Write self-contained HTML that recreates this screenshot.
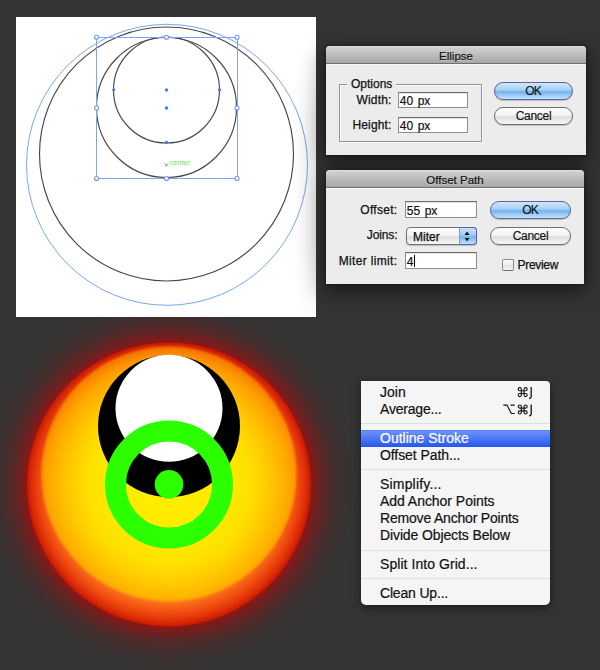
<!DOCTYPE html>
<html><head><meta charset="utf-8">
<style>
html,body{margin:0;padding:0;}
body{width:600px;height:670px;background:#343434;position:relative;overflow:hidden;font-family:"Liberation Sans",sans-serif;}
.abs{position:absolute;}
svg.art{position:absolute;left:0;top:0;}
.dlg{position:absolute;background:#ececec;border-radius:4px 4px 0 0;box-shadow:0 6px 20px 2px rgba(0,0,0,0.5),0 0 4px rgba(0,0,0,0.35);}
.tb{position:absolute;left:0;top:0;right:0;height:17px;border-radius:4px 4px 0 0;background:linear-gradient(#e6e6e6,#d2d2d2 1px,#bdbdbd 50%,#a6a6a6);border-bottom:1px solid #6e6e6e;}
.hl{position:absolute;left:0;right:0;top:18px;height:1px;background:#f8f8f8;}
.tt{position:absolute;left:0;right:0;top:2.8px;text-align:center;font-size:11.5px;line-height:14px;color:#111;-webkit-text-stroke:0.2px #111;text-shadow:0 1px 0 rgba(255,255,255,0.35);}
.lbl{position:absolute;font-size:12px;color:#111;white-space:nowrap;line-height:14px;-webkit-text-stroke:0.25px #111;}
.fld{position:absolute;background:#fff;border:1px solid #8e8e8e;border-top-color:#6a6a6a;box-shadow:inset 0 1px 1px rgba(0,0,0,0.12);box-sizing:border-box;}
.fld span{position:absolute;left:0.8px;top:1px;word-spacing:1.2px;font-size:12px;line-height:14px;color:#111;-webkit-text-stroke:0.2px #111;}
.caret{position:absolute;left:7.5px;top:2px;width:1px;height:12px;background:#000;}
.btn{position:absolute;box-sizing:border-box;border:1px solid #6f6f6f;border-radius:9px;background:linear-gradient(#fdfdfd,#f3f3f3 45%,#dedede 55%,#f7f7f7);text-align:center;font-size:12px;line-height:16px;color:#111;-webkit-text-stroke:0.15px #111;box-shadow:0 1px 1px rgba(0,0,0,0.2);}
.btn.def{border-color:#5b64a0;background:linear-gradient(#d2e6fb,#a6cff5 45%,#72b2ef 55%,#c6e5fc);}
.pop{position:absolute;box-sizing:border-box;border:1px solid #707070;border-radius:4px;background:linear-gradient(#fdfdfd,#f3f3f3 45%,#dedede 55%,#f7f7f7);box-shadow:0 1px 1px rgba(0,0,0,0.2);}
.pop span{position:absolute;left:6px;top:1.5px;font-size:12px;line-height:14px;color:#111;-webkit-text-stroke:0.25px #111;}
.pb{position:absolute;right:-1px;top:-1px;width:18px;bottom:-1px;box-sizing:border-box;border:1px solid #5b64a0;border-left-color:#7f9cc8;border-radius:0 4px 4px 0;background:linear-gradient(#c9e0f8,#a2cbf3 45%,#76b2ee 55%,#bfe0fb);}
.pb svg{position:absolute;left:0;top:0;}
.cb{position:absolute;width:12px;height:12px;box-sizing:border-box;border:1px solid #8a8a8a;border-bottom-color:#6a6a6a;border-radius:2px;background:linear-gradient(#fbfbfb,#eeeeee 50%,#e2e2e2 55%,#f4f4f4);}
.r{text-align:right;}
.menu{position:absolute;left:361px;top:381px;width:189px;height:224px;background:#f5f5f5;border-radius:0 4px 5px 5px;box-shadow:0 3px 10px rgba(0,0,0,0.5);}
.mi{position:absolute;left:19px;font-size:14px;line-height:17px;color:#111;white-space:nowrap;-webkit-text-stroke:0.2px currentColor;}
.sep{position:absolute;left:0;right:0;height:1px;background:#dedede;}
</style></head>
<body>
<svg class="art" width="600" height="670" viewBox="0 0 600 670">
  <defs>
    
    <filter id="soft" x="-10%" y="-10%" width="120%" height="120%">
      <feGaussianBlur stdDeviation="0.9"/>
    </filter>
    <radialGradient id="halo" cx="169" cy="484.5" r="190" gradientUnits="userSpaceOnUse">
      <stop offset="0.73" stop-color="#a81010" stop-opacity="0.95"/>
      <stop offset="0.745" stop-color="#a01010" stop-opacity="0.85"/>
      <stop offset="0.80" stop-color="#901414" stop-opacity="0.52"/>
      <stop offset="0.86" stop-color="#801818" stop-opacity="0.26"/>
      <stop offset="0.92" stop-color="#701818" stop-opacity="0.1"/>
      <stop offset="1" stop-color="#601818" stop-opacity="0"/>
    </radialGradient>
    <radialGradient id="ring" cx="169" cy="484.5" r="142" gradientUnits="userSpaceOnUse">
      <stop offset="0.8" stop-color="#ff8020"/>
      <stop offset="0.9" stop-color="#f25010"/>
      <stop offset="0.96" stop-color="#e03008"/>
      <stop offset="1" stop-color="#c81800"/>
    </radialGradient>
    <radialGradient id="sun" cx="169" cy="484.5" r="138" gradientUnits="userSpaceOnUse">
      <stop offset="0" stop-color="#ffee00"/>
      <stop offset="0.45" stop-color="#ffe800"/>
      <stop offset="0.587" stop-color="#ffe000"/>
      <stop offset="0.732" stop-color="#ffc800"/>
      <stop offset="0.877" stop-color="#ffa600"/>
      <stop offset="0.928" stop-color="#ff9200"/>
      <stop offset="1" stop-color="#f07000"/>
    </radialGradient>
          </defs>
  <circle cx="169" cy="484.5" r="190" fill="url(#halo)"/>
  <!-- top-left panel -->
  <rect x="16" y="17" width="300" height="300" fill="#ffffff"/>
  <g fill="none" stroke-width="1">
    <circle cx="167" cy="164.8" r="140.5" stroke="#7aa6f5"/>
    <circle cx="166.5" cy="154" r="127" stroke="#484848" stroke-width="1.15"/>
    <circle cx="166.5" cy="107.5" r="70" stroke="#484848" stroke-width="1.15"/>
    <circle cx="166.5" cy="90" r="53" stroke="#484848" stroke-width="1.15"/>
    <rect x="96.5" y="37.5" width="141" height="141" stroke="#7ea4f5"/>
  </g>
  <g fill="#fff" stroke="#6b98f2" stroke-width="1.1"><circle cx="96.5" cy="37.3" r="2"/><circle cx="166.5" cy="37.3" r="2"/><circle cx="237" cy="37.3" r="2"/><circle cx="96.6" cy="108" r="2"/><circle cx="237" cy="108" r="2"/><circle cx="96.5" cy="178.5" r="2"/><circle cx="166.5" cy="178.5" r="2"/><circle cx="237" cy="178.5" r="2"/></g>
  <g fill="#3a7ef2"><circle cx="166.5" cy="90" r="1.7"/><circle cx="166.5" cy="108" r="1.7"/><circle cx="113.7" cy="89.8" r="1.6"/><circle cx="219.5" cy="89.8" r="1.6"/><circle cx="166.5" cy="142.5" r="1.7"/></g>
  <path d="M164.8,163.3L168,166.5M168,163.3L164.8,166.5" stroke="#3c9ad8" stroke-width="0.9"/>
  <text x="169.3" y="164.6" font-family="Liberation Sans" font-size="7.5" fill="#6be85a">center</text>

  <!-- glowing sun -->
  <circle cx="169" cy="484.5" r="142" fill="url(#ring)"/>
  <circle cx="169" cy="474" r="127.5" fill="url(#sun)" filter="url(#soft)"/>
  <circle cx="169" cy="426.2" r="71" fill="#000"/>
  <circle cx="169" cy="408.3" r="53.5" fill="#fff"/>
  <circle cx="169" cy="484.5" r="53.5" fill="none" stroke="#2bff00" stroke-width="21"/>
  <circle cx="169" cy="484.4" r="14.3" fill="#2bff00"/>
</svg>

<div class="abs" style="left:294px;top:30px;width:22px;height:287px;background:linear-gradient(to right,rgba(0,0,0,0),rgba(0,0,0,0.09));-webkit-mask-image:linear-gradient(rgba(0,0,0,0),rgba(0,0,0,0) 6%,#000 30%,#000 75%,rgba(0,0,0,0));"></div>
<!-- Ellipse dialog -->
<div class="dlg" style="left:326px;top:46px;width:260px;height:109px;">
  <div class="tb"><div class="tt">Ellipse</div></div>
  <div class="hl"></div>
  <div class="abs" style="left:13px;top:38px;width:143px;height:58px;border:1px solid #959595;box-sizing:border-box;box-shadow:inset 1px 1px 0 rgba(255,255,255,0.85),1px 1px 0 rgba(255,255,255,0.6);"></div>
  <div class="lbl" style="left:21px;top:30.8px;background:#ececec;padding:0 4px;">Options</div>
  <div class="lbl r" style="right:194.5px;top:47.2px;letter-spacing:0.15px;">Width:</div>
  <div class="fld" style="left:72px;top:46px;width:70px;height:16px;"><span>40 px</span></div>
  <div class="lbl r" style="right:194.5px;top:71.5px;letter-spacing:0.15px;">Height:</div>
  <div class="fld" style="left:72px;top:71px;width:70px;height:16px;"><span>40 px</span></div>
  <div class="btn def" style="left:168px;top:36px;width:79px;height:18px;letter-spacing:-1px;text-indent:-1px;">OK</div>
  <div class="btn" style="left:168px;top:61px;width:79px;height:18px;letter-spacing:-0.3px;">Cancel</div>
</div>

<!-- Offset Path dialog -->
<div class="dlg" style="left:326px;top:170px;width:258px;height:114px;">
  <div class="tb"><div class="tt">Offset Path</div></div>
  <div class="hl"></div>
  <div class="lbl r" style="right:186.5px;top:33px;letter-spacing:0.3px;">Offset:</div>
  <div class="fld" style="left:79px;top:31px;width:72px;height:17px;"><span style="top:1.5px">55 px</span></div>
  <div class="lbl r" style="right:186.5px;top:58.3px;letter-spacing:-0.1px;">Joins:</div>
  <div class="pop" style="left:80px;top:57px;width:71px;height:18px;"><span>Miter</span><div class="pb"><svg width="17" height="17" viewBox="0 0 17 17"><path d="M4.6,6.9 L7.1,3.6 L9.6,6.9 Z M4.6,9.9 L7.1,13.2 L9.6,9.9 Z" fill="#111"/></svg></div></div>
  <div class="lbl r" style="right:186.5px;top:84px;letter-spacing:0.35px;">Miter limit:</div>
  <div class="fld" style="left:79px;top:82px;width:72px;height:17px;"><span style="top:1.5px">4</span><i class="caret"></i></div>
  <div class="btn def" style="left:164px;top:31px;width:81px;height:18px;letter-spacing:-1px;text-indent:-1px;">OK</div>
  <div class="btn" style="left:164px;top:57px;width:81px;height:18px;letter-spacing:-0.3px;">Cancel</div>
  <div class="cb" style="left:176px;top:88.5px;"></div>
  <div class="lbl" style="left:191.5px;top:88px;letter-spacing:-0.3px;">Preview</div>
</div>

<!-- Context menu -->
<div class="menu">
  <div class="mi" style="top:3px;">Join</div>
  <div class="mi" style="top:20px;letter-spacing:-0.2px;">Average...</div>
  <div class="sep" style="top:42px;"></div>
  <div class="abs" style="left:0;right:0;top:49px;height:17px;background:linear-gradient(#6d92f8,#4a76f4 50%,#2454f0);border-top:1px solid #5a80ee;box-sizing:border-box;"></div>
  <div class="mi" style="top:48.7px;color:#fff;">Outline Stroke</div>
  <div class="mi" style="top:66px;letter-spacing:-0.08px;">Offset Path...</div>
  <div class="sep" style="top:88px;"></div>
  <div class="mi" style="top:94.5px;letter-spacing:0.18px;">Simplify...</div>
  <div class="mi" style="top:111.5px;letter-spacing:-0.04px;">Add Anchor Points</div>
  <div class="mi" style="top:128.5px;letter-spacing:-0.19px;">Remove Anchor Points</div>
  <div class="mi" style="top:145.5px;letter-spacing:-0.115px;">Divide Objects Below</div>
  <div class="sep" style="top:169px;"></div>
  <div class="mi" style="top:175.2px;letter-spacing:0.06px;">Split Into Grid...</div>
  <div class="sep" style="top:197px;"></div>
  <div class="mi" style="top:203.5px;letter-spacing:-0.18px;">Clean Up...</div>
  <svg class="abs" style="left:0;top:0;" width="189" height="40" viewBox="0 0 189 40">
    <g fill="none" stroke="#151515" stroke-width="1.1">
      <g transform="translate(157.2,6.6) scale(0.9)" stroke-width="1.25">
        <path d="M3.5,1.75V8.25M6.5,1.75V8.25M1.75,3.5H8.25M1.75,6.5H8.25M3.5,1.75A1.75,1.75 0 1 0 1.75,3.5M6.5,1.75A1.75,1.75 0 1 1 8.25,3.5M6.5,8.25A1.75,1.75 0 1 0 8.25,6.5M3.5,8.25A1.75,1.75 0 1 1 1.75,6.5"/>
      </g>
      <path d="M170.2,6.1V15.6Q170.2,17.4 168,17.5" stroke-width="1.3"/>
      <g transform="translate(157.2,24) scale(0.9)" stroke-width="1.25">
        <path d="M3.5,1.75V8.25M6.5,1.75V8.25M1.75,3.5H8.25M1.75,6.5H8.25M3.5,1.75A1.75,1.75 0 1 0 1.75,3.5M6.5,1.75A1.75,1.75 0 1 1 8.25,3.5M6.5,8.25A1.75,1.75 0 1 0 8.25,6.5M3.5,8.25A1.75,1.75 0 1 1 1.75,6.5"/>
      </g>
      <path d="M170.2,23.5V33Q170.2,34.8 168,34.9" stroke-width="1.3"/>
      <path d="M142.3,24.1H146L150.3,32.5H153.7M149.5,24.1H153.7" stroke-width="1.2"/>
    </g>
  </svg>
</div>
</body></html>
